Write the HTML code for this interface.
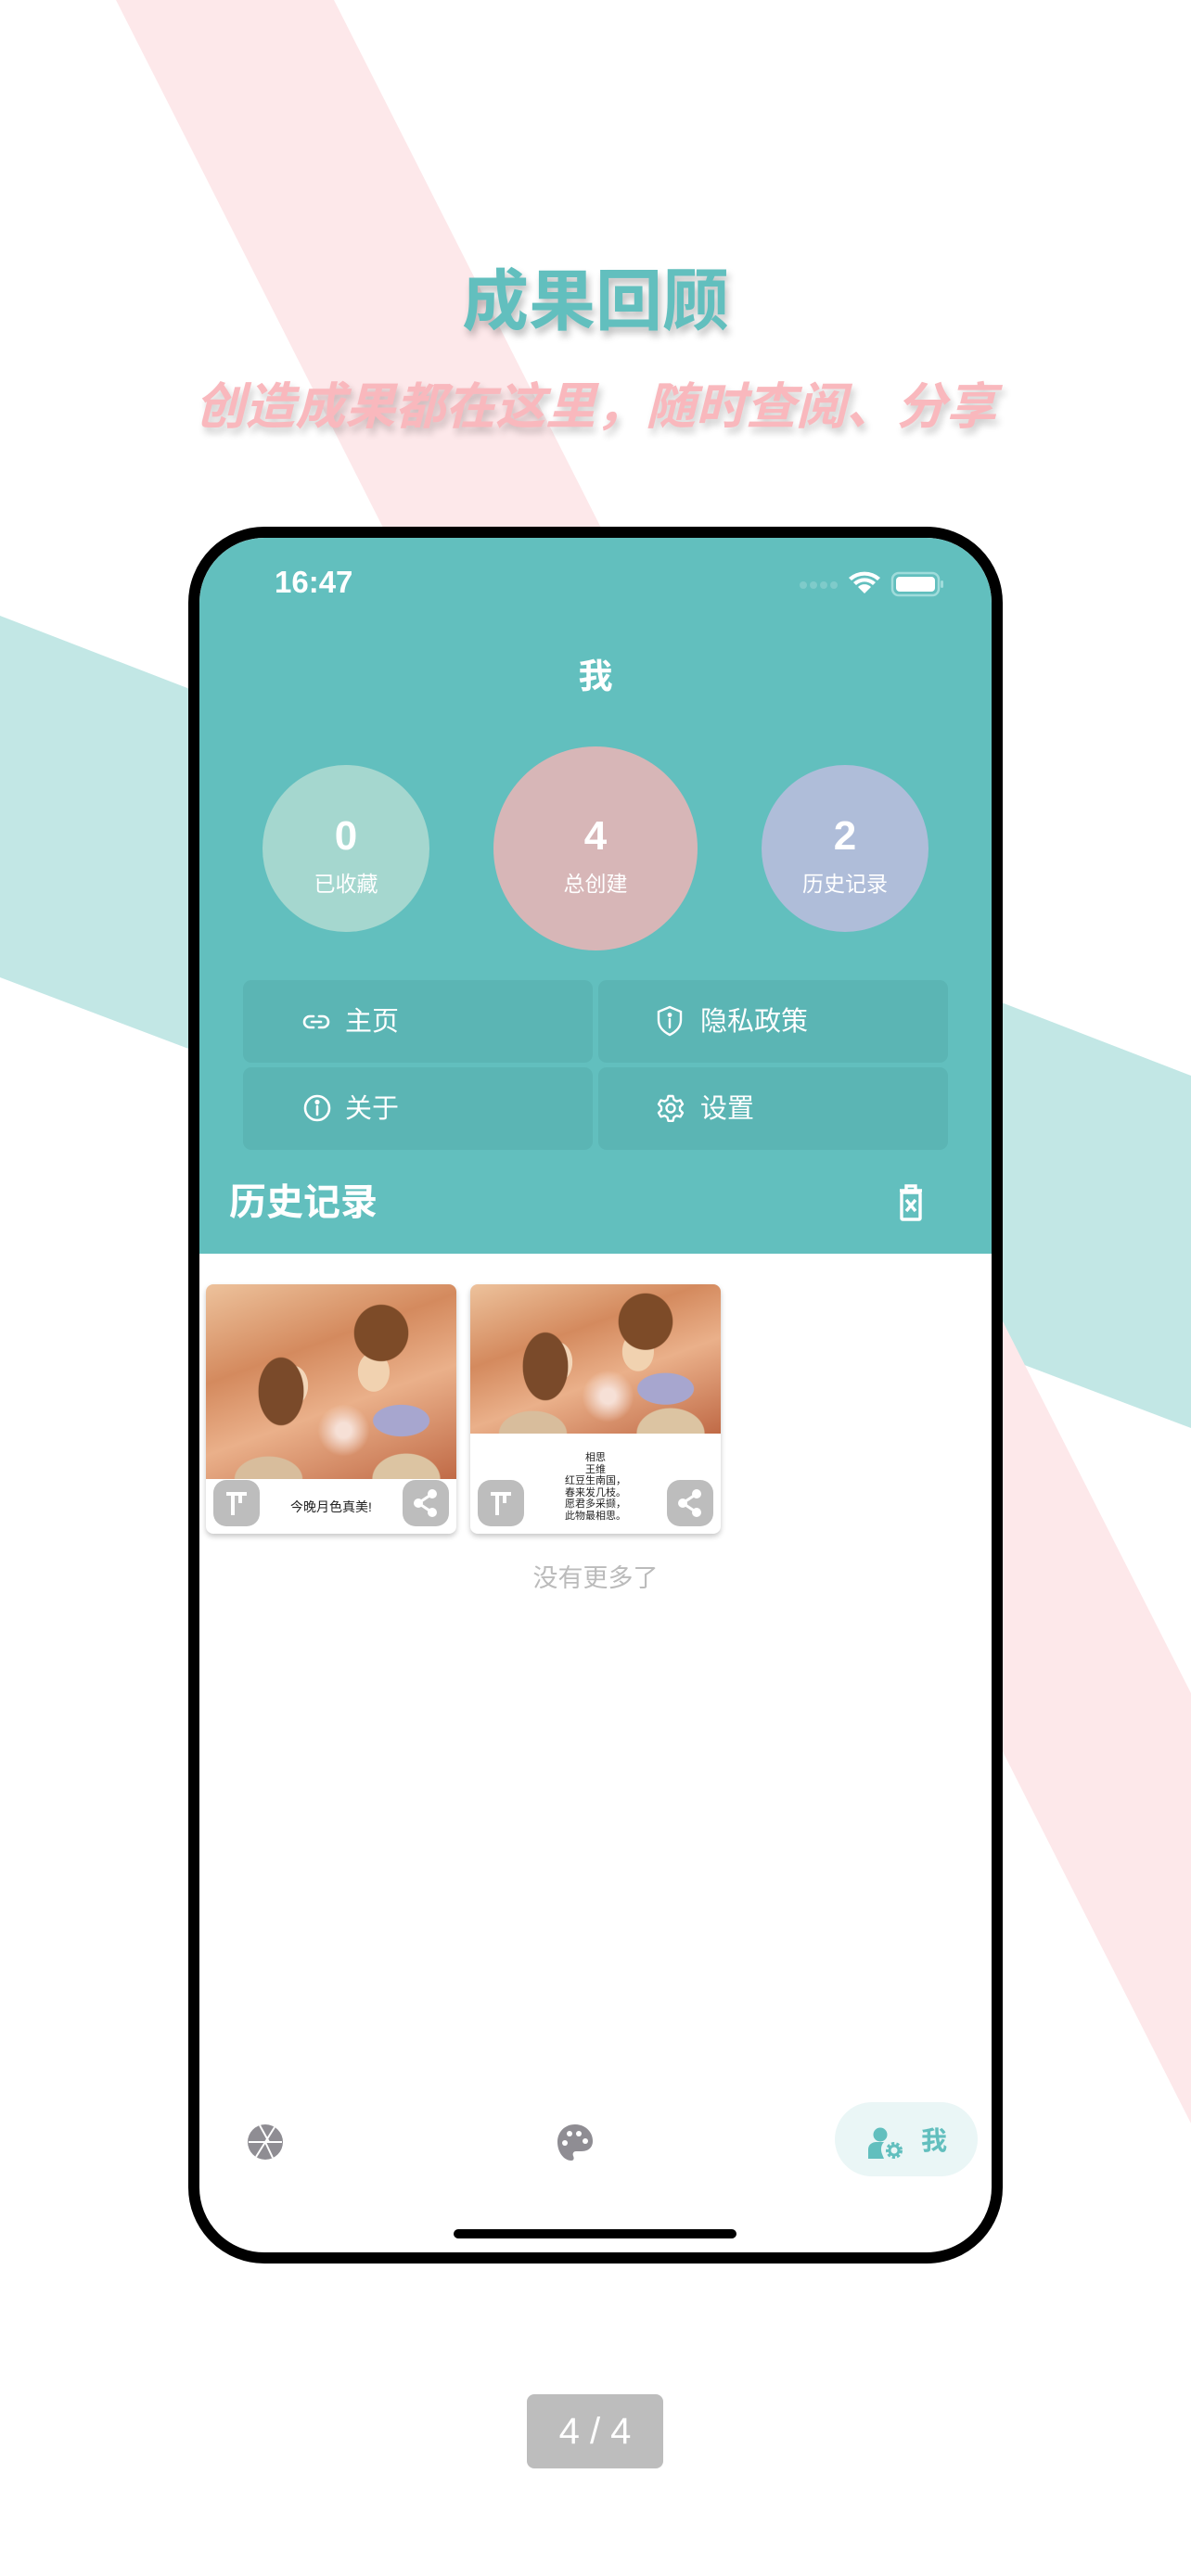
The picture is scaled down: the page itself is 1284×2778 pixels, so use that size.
<!DOCTYPE html>
<html><head><meta charset="utf-8">
<style>
*{margin:0;padding:0;box-sizing:border-box}
body{width:1284px;height:2778px;overflow:hidden;background:#fff;font-family:"Liberation Sans","Noto Sans CJK SC",sans-serif}
.abs{position:absolute}
#root{position:relative;width:1284px;height:2778px;overflow:hidden;background:#fff}
.band{position:absolute;left:0;top:0;width:1284px;height:2778px}
.title{position:absolute;left:0;width:1284px;text-align:center;font-weight:bold}
.phone{position:absolute;left:203px;top:568px;width:878px;height:1873px;border:12px solid #000;border-radius:82px;background:#fff;overflow:hidden}
.hdr{position:absolute;left:0;top:0;width:854px;height:772px;background:#62bfbe}
.circ{position:absolute;border-radius:50%;color:#fff;text-align:center}
.circ .n{position:absolute;left:0;width:100%;font-weight:bold;font-size:44px;line-height:44px}
.circ .l{position:absolute;left:0;width:100%;font-size:23px;line-height:26px}
.btn{position:absolute;width:377px;height:89px;background:#5bb5b4;border-radius:9px;color:#fff;font-size:29px}
.btn svg{position:absolute;top:31px}
.btn span{position:absolute;top:27px;line-height:36px}
.card{position:absolute;width:270px;height:269px;background:#fff;border-radius:8px;box-shadow:0 3px 6px rgba(0,0,0,.22);overflow:hidden}
.img{position:absolute;left:0;top:0;width:270px;
background:
radial-gradient(ellipse 40px 60px at 30% 55%,#7a4a2a 60%,transparent 62%),
radial-gradient(ellipse 48px 50px at 70% 25%,#7d4b28 60%,transparent 62%),
radial-gradient(ellipse 22px 30px at 35% 52%,#f3d6b8 70%,transparent 72%),
radial-gradient(ellipse 24px 30px at 67% 45%,#f1d2b0 70%,transparent 72%),
radial-gradient(ellipse 50px 28px at 78% 70%,#a7a6cf 60%,transparent 62%),
radial-gradient(ellipse 60px 40px at 25% 100%,#d8bd9c 60%,transparent 62%),
radial-gradient(ellipse 60px 45px at 80% 100%,#dcc4a2 60%,transparent 62%),
radial-gradient(ellipse 40px 40px at 55% 75%,#f6e0d6 20%,transparent 70%),
linear-gradient(160deg,#edc29c 0%,#d48a5e 35%,#eab08a 60%,#c06a46 100%)}
.sb{position:absolute;width:50px;height:50px;border-radius:14px;background:#bdbdbd}
</style></head><body><div id="root">
<svg class="band" viewBox="0 0 1284 2778">
<polygon points="0,664 1284,1160 1284,1540 0,1054" fill="#c2e7e5"/>
<polygon points="125,0 360,0 1284,1826 1284,2290" fill="#fde8ea"/>
</svg>
<div class="title" style="top:283px;font-size:72px;line-height:86px;color:#62bfbe;text-shadow:3px 6px 8px rgba(0,0,0,.25)">成果回顾</div>
<div class="title" style="top:406px;font-size:54px;line-height:66px;color:#f9b8bd;font-style:italic;text-shadow:3px 6px 8px rgba(0,0,0,.2)">创造成果都在这里，随时查阅、分享</div>

<div class="phone">
<div class="hdr">
 <div class="abs" style="left:81px;top:29px;font-size:33px;font-weight:bold;color:#fff;line-height:38px">16:47</div>
 <div class="abs" style="left:647px;top:35px">
  <svg width="200" height="30" viewBox="0 0 200 30">
   <g fill="#7fcbca"><circle cx="4" cy="16" r="4"/><circle cx="15" cy="16" r="4"/><circle cx="26" cy="16" r="4"/><circle cx="37" cy="16" r="4"/></g>
   <path d="M53 8a26 26 0 0 1 34 0l-3 3a21 21 0 0 0-28 0z M58 13a18 18 0 0 1 24 0l-3 3a13 13 0 0 0-18 0z M63 18a10 10 0 0 1 14 0l-7 7z" fill="#fff"/>
   <rect x="100" y="3" width="50" height="24" rx="7" fill="none" stroke="#a0dcdb" stroke-width="2.5"/>
   <rect x="104" y="7" width="42" height="16" rx="4" fill="#fff"/>
   <rect x="152" y="11" width="3" height="8" rx="1.5" fill="#a0dcdb"/>
  </svg>
 </div>
 <div class="abs" style="left:0;width:854px;top:128px;text-align:center;font-size:37px;font-weight:bold;color:#fff;line-height:44px">我</div>
 <div class="circ" style="left:68px;top:245px;width:180px;height:180px;background:#a5d7cf"><div class="n" style="top:55px">0</div><div class="l" style="top:115px">已收藏</div></div>
 <div class="circ" style="left:317px;top:225px;width:220px;height:220px;background:#d7b6b7"><div class="n" style="top:75px">4</div><div class="l" style="top:135px">总创建</div></div>
 <div class="circ" style="left:606px;top:245px;width:180px;height:180px;background:#afbdd9"><div class="n" style="top:55px">2</div><div class="l" style="top:115px">历史记录</div></div>

 <div class="btn" style="left:47px;top:477px">
  <svg style="left:64px" width="30" height="28" viewBox="0 0 30 28" fill="none" stroke="#fff" stroke-width="2.6" stroke-linecap="round"><path d="M12 8H8a6 6 0 0 0 0 12h4M18 8h4a6 6 0 0 1 0 12h-4M10 14h10"/></svg>
  <span style="left:110px">主页</span></div>
 <div class="btn" style="left:430px;top:477px">
  <svg style="left:62px;top:27px" width="30" height="34" viewBox="0 0 30 34" fill="none" stroke="#fff" stroke-width="2.4"><path d="M15 2L27 7v9c0 8-6 13-12 16C9 29 3 24 3 16V7z"/><path d="M15 15v9" stroke-linecap="round"/><circle cx="15" cy="10.5" r="1.2" fill="#fff"/></svg>
  <span style="left:110px">隐私政策</span></div>
 <div class="btn" style="left:47px;top:571px">
  <svg style="left:64px;top:28px" width="32" height="32" viewBox="0 0 32 32" fill="none" stroke="#fff" stroke-width="2.6"><circle cx="16" cy="16" r="13"/><path d="M16 14v9" stroke-linecap="round"/><circle cx="16" cy="9.5" r="1.3" fill="#fff"/></svg>
  <span style="left:110px">关于</span></div>
 <div class="btn" style="left:430px;top:571px">
  <svg style="left:62px;top:28px" width="32" height="32" viewBox="0 0 32 32" fill="none" stroke="#fff" stroke-width="2.4" stroke-linejoin="round"><path d="M13.5 3h5l1 4 3 1.7 4-1.2 2.5 4.3-3 2.9v3.4l3 2.9-2.5 4.3-4-1.2-3 1.7-1 4h-5l-1-4-3-1.7-4 1.2-2.5-4.3 3-2.9v-3.4l-3-2.9 2.5-4.3 4 1.2 3-1.7z"/><circle cx="16" cy="16" r="4.5"/></svg>
  <span style="left:110px">设置</span></div>

 <div class="abs" style="left:32px;top:694px;font-size:40px;font-weight:bold;color:#fff;line-height:46px">历史记录</div>
 <svg class="abs" style="left:753px;top:696px" width="28" height="42" viewBox="0 0 28 42" fill="none" stroke="#fff" stroke-width="3.4"><path d="M2 8h24M9 8V3h10v5"/><rect x="4" y="10" width="20" height="29" rx="1"/><path d="M9 18l10 12M19 18L9 30"/></svg>
</div>

<div class="card" style="left:7px;top:805px">
 <div class="img" style="height:210px"></div>
 <div class="sb" style="left:8px;top:211px"><svg width="50" height="50" viewBox="0 0 50 50" stroke="#fff" stroke-width="4" fill="none"><path d="M14 15h22M21 15v23M29 15v10"/></svg></div>
 <div class="abs" style="left:0;width:270px;top:230px;text-align:center;font-size:14px;color:#222">今晚月色真美!</div>
 <div class="sb" style="left:212px;top:211px"><svg width="50" height="50" viewBox="0 0 50 50"><g fill="#fff"><circle cx="32" cy="15" r="5"/><circle cx="17" cy="25" r="5"/><circle cx="32" cy="35" r="5"/></g><path d="M32 15L17 25l15 10" stroke="#fff" stroke-width="3" fill="none"/></svg></div>
</div>
<div class="card" style="left:292px;top:805px">
 <div class="img" style="height:161px"></div>
 <div class="abs" style="left:0;width:270px;top:181px;text-align:center;font-size:11px;line-height:12.6px;color:#222">相思<br>王维<br>红豆生南国，<br>春来发几枝。<br>愿君多采撷，<br>此物最相思。</div>
 <div class="sb" style="left:8px;top:211px"><svg width="50" height="50" viewBox="0 0 50 50" stroke="#fff" stroke-width="4" fill="none"><path d="M14 15h22M21 15v23M29 15v10"/></svg></div>
 <div class="sb" style="left:212px;top:211px"><svg width="50" height="50" viewBox="0 0 50 50"><g fill="#fff"><circle cx="32" cy="15" r="5"/><circle cx="17" cy="25" r="5"/><circle cx="32" cy="35" r="5"/></g><path d="M32 15L17 25l15 10" stroke="#fff" stroke-width="3" fill="none"/></svg></div>
</div>
<div class="abs" style="left:0;width:854px;top:1106px;text-align:center;font-size:27px;color:#bbb;line-height:32px">没有更多了</div>

<svg class="abs" style="left:51px;top:1710px" width="40" height="40" viewBox="0 0 40 40"><circle cx="20" cy="20" r="19" fill="#8f8d93"/><g stroke="#fff" stroke-width="2"><path d="M14 2l10 18M30 4L20 20M38 20H20M28 37L20 20M10 36l10-16M2 20h18"/></g></svg>
<svg class="abs" style="left:385px;top:1710px" width="40" height="42" viewBox="0 0 40 42"><path d="M20 1C9 1 1 9 1 20s7 20 15 20c3 0 3-3 2-5s0-5 3-5h6c7 0 12-4 12-11C39 9 31 1 20 1z" fill="#8f8d93"/><g fill="#fff"><circle cx="14" cy="11" r="3"/><circle cx="24" cy="11" r="3"/><circle cx="9" cy="21" r="3"/><circle cx="31" cy="19" r="3"/></g></svg>
<div class="abs" style="left:685px;top:1687px;width:154px;height:80px;border-radius:40px;background:#eaf6f6"></div>
<svg class="abs" style="left:720px;top:1713px" width="40" height="36" viewBox="0 0 40 36"><circle cx="14" cy="9" r="7.5" fill="#62bfbe"/><path d="M1 35V25c0-5 4-8 9-8h8c-3 3-4 8-2 13l2 5z" fill="#62bfbe"/><circle cx="29" cy="26" r="7" fill="none" stroke="#62bfbe" stroke-width="4" stroke-dasharray="3 2"/><circle cx="29" cy="26" r="5" fill="none" stroke="#62bfbe" stroke-width="3"/></svg>
<div class="abs" style="left:778px;top:1712px;font-size:28px;color:#62bfbe;font-weight:bold;line-height:34px">我</div>
<div class="abs" style="left:274px;top:1824px;width:305px;height:10px;border-radius:5px;background:#000"></div>
</div>

<div class="abs" style="left:568px;top:2582px;width:147px;height:80px;border-radius:8px;background:#bdbdbd;color:#fff;font-size:40px;line-height:80px;text-align:center">4 / 4</div>
</div></body></html>
